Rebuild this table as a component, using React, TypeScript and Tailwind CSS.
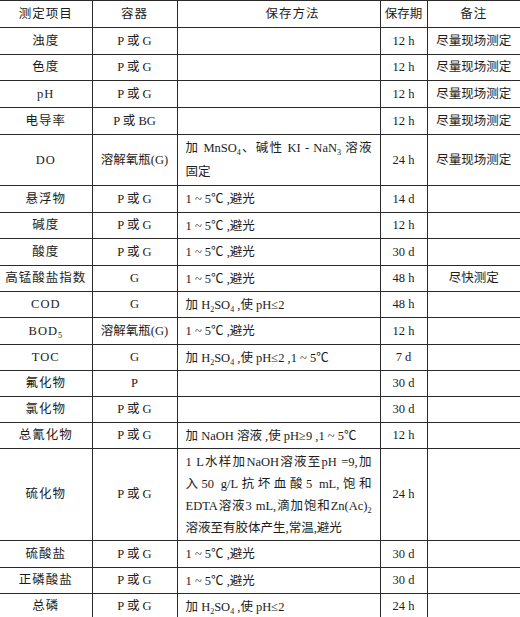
import React from 'react';

const font = { fontFamily: '"Liberation Serif", "Noto Sans CJK SC", serif' };

type Row = {
  item: React.ReactNode;
  box: string;
  method?: React.ReactNode[];
  keep: string;
  note?: string;
  h: string;
};

const S = ({ children }: { children: React.ReactNode }) => (
  <sub className="relative top-[3px] align-baseline text-[8px] leading-none">{children}</sub>
);

const cool = ['1 ~ 5℃ ,避光'];
const full = 'whitespace-nowrap [text-align-last:justify] text-justify';

const rows: Row[] = [
  { item: '浊度', box: 'P 或 G', keep: '12 h', note: '尽量现场测定', h: 'h-[27px]' },
  { item: '色度', box: 'P 或 G', keep: '12 h', note: '尽量现场测定', h: 'h-[26px]' },
  { item: 'pH', box: 'P 或 G', keep: '12 h', note: '尽量现场测定', h: 'h-[27px]' },
  { item: '电导率', box: 'P 或 BG', keep: '12 h', note: '尽量现场测定', h: 'h-[27px]' },
  {
    item: 'DO',
    box: '溶解氧瓶(G)',
    method: [
      <div className={full}>
        加 MnSO<S>4</S>、碱性 KI - NaN<S>3</S> 溶液
      </div>,
      <div>固定</div>,
    ],
    keep: '24 h',
    note: '尽量现场测定',
    h: 'h-[51px]',
  },
  { item: '悬浮物', box: 'P 或 G', method: cool, keep: '14 d', h: 'h-[27px]' },
  { item: '碱度', box: 'P 或 G', method: cool, keep: '12 h', h: 'h-[26px]' },
  { item: '酸度', box: 'P 或 G', method: cool, keep: '30 d', h: 'h-[27px]' },
  { item: '高锰酸盐指数', box: 'G', method: cool, keep: '48 h', note: '尽快测定', h: 'h-[26px]' },
  {
    item: 'COD',
    box: 'G',
    method: [<span>加 H<S>2</S>SO<S>4</S> ,使 pH≤2</span>],
    keep: '48 h',
    h: 'h-[26px]',
  },
  { item: <span>BOD<S>5</S></span>, box: '溶解氧瓶(G)', method: cool, keep: '12 h', h: 'h-[27px]' },
  {
    item: 'TOC',
    box: 'G',
    method: [<span>加 H<S>2</S>SO<S>4</S> ,使 pH≤2 ,1 ~ 5℃</span>],
    keep: '7 d',
    h: 'h-[26px]',
  },
  { item: '氟化物', box: 'P', keep: '30 d', h: 'h-[26px]' },
  { item: '氯化物', box: 'P 或 G', keep: '30 d', h: 'h-[26px]' },
  {
    item: '总氰化物',
    box: 'P 或 G',
    method: ['加 NaOH 溶液 ,使 pH≥9 ,1 ~ 5℃'],
    keep: '12 h',
    h: 'h-[26px]',
  },
  {
    item: '硫化物',
    box: 'P 或 G',
    method: [
      <div className={full}>1 L水样加NaOH溶液至pH =9,加</div>,
      <div className={full}>入50 g/L抗坏血酸5 mL,饱和</div>,
      <div className={full}>
        EDTA溶液3 mL,滴加饱和Zn(Ac)<S>2</S>
      </div>,
      <div className="whitespace-nowrap">溶液至有胶体产生,常温,避光</div>,
    ],
    keep: '24 h',
    h: 'h-[92px]',
  },
  { item: '硫酸盐', box: 'P 或 G', method: cool, keep: '30 d', h: 'h-[27px]' },
  { item: '正磷酸盐', box: 'P 或 G', method: cool, keep: '30 d', h: 'h-[26px]' },
  {
    item: '总磷',
    box: 'P 或 G',
    method: [<span>加 H<S>2</S>SO<S>4</S> ,使 pH≤2</span>],
    keep: '24 h',
    h: 'h-[26px]',
  },
];

const cell = 'border-l border-b border-[#2a2a2a] p-0 align-middle';

export default function App() {
  return (
    <div lang="zh-CN" className="w-[520px] h-[617px] overflow-hidden bg-white text-[#1c1c1c]" style={font}>
      <table className="w-[520px] table-fixed border-collapse border-t border-[#2a2a2a] text-[12.5px] leading-none">
        <colgroup>
          <col className="w-[92px]" />
          <col className="w-[85px]" />
          <col className="w-[203px]" />
          <col className="w-[47px]" />
          <col className="w-[93px]" />
        </colgroup>
        <thead>
          <tr className="h-[27px]">
            <th className="border-b border-[#2a2a2a] p-0 font-normal tracking-[1px]">测定项目</th>
            <th className={`${cell} font-normal tracking-[1px]`}>容器</th>
            <th className={`${cell} font-normal text-left pl-[88px] tracking-[1px]`}>保存方法</th>
            <th className={`${cell} font-normal`}>保存期</th>
            <th className={`${cell} font-normal tracking-[1px]`}>备注</th>
          </tr>
        </thead>
        <tbody>
          {rows.map((r, i) => (
            <tr key={i} className={r.h}>
              <td className="border-b border-[#2a2a2a] p-0 text-center tracking-[1px] whitespace-nowrap">
                {r.item}
              </td>
              <td className={`${cell} text-center whitespace-nowrap`}>{r.box}</td>
              <td className={`${cell} px-[8px]`}>
                {r.method && (
                  <div className={r.method.length > 2 ? 'leading-[22px]' : 'leading-[24px]'}>
                    {r.method.map((m, j) => (
                      <React.Fragment key={j}>{m}</React.Fragment>
                    ))}
                  </div>
                )}
              </td>
              <td className={`${cell} text-center whitespace-nowrap`}>{r.keep}</td>
              <td className={`${cell} text-center whitespace-nowrap`}>{r.note ?? ''}</td>
            </tr>
          ))}
        </tbody>
      </table>
    </div>
  );
}
